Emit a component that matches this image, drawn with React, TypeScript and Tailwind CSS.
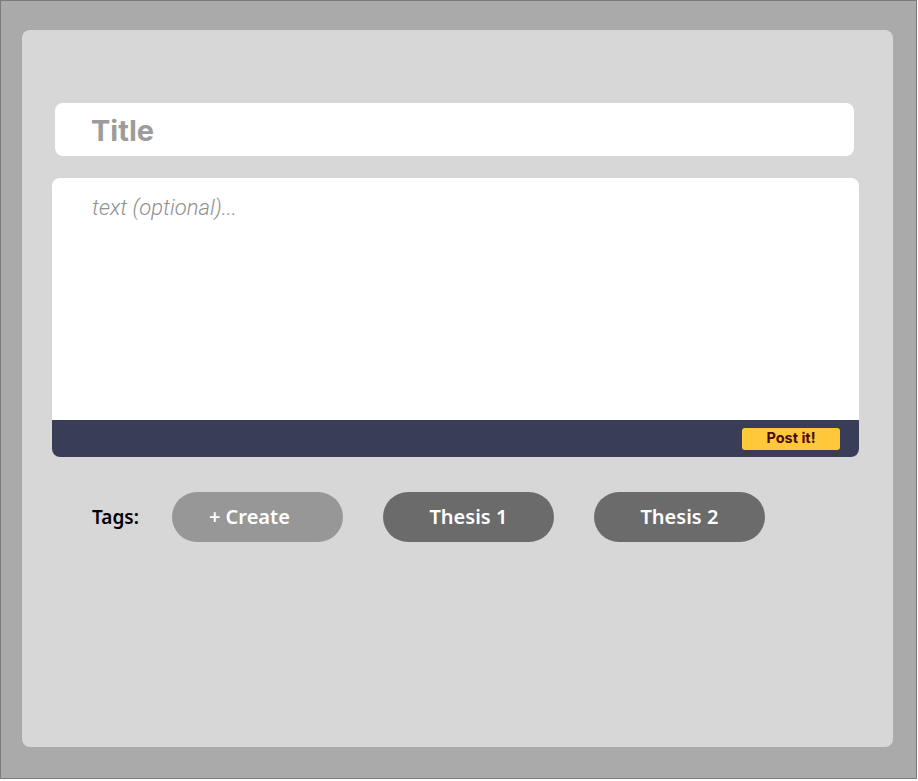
import React from "react";

const tags = [
  { label: "+ Create", className: "bg-[#979797] pr-[16px]" },
  { label: "Thesis 1", className: "bg-[#6b6b6b]" },
  { label: "Thesis 2", className: "bg-[#6b6b6b]" },
];

const App: React.FC = () => {
  return (
    <div className="w-[917px] h-[779px] border border-[#7b7b7b] bg-[#aaaaaa] pl-[21px] pt-[29px]">
      <div className="w-[871px] h-[717px] rounded-lg bg-[#d7d7d7] pt-[73px]">
        <div className="ml-[33px] w-[799px] h-[53px] rounded-lg bg-white flex items-center pl-[36px] pt-[2px]">
          <span className="font-['Inter',sans-serif] font-bold text-[29px] text-[#9c9c9c] leading-none">
            Title
          </span>
        </div>

        <div className="ml-[30px] mt-[22px] w-[807px] h-[279px] rounded-lg bg-white overflow-hidden flex flex-col">
          <div className="flex-1 pl-[40px] pt-[13px]">
            <span className="font-['Roboto',sans-serif] italic font-light text-[22px] text-[#8f8f8f]">
              text (optional)...
            </span>
          </div>
          <div className="h-[37px] bg-[#3a3d57] flex items-center justify-end pr-[19px]">
            <button className="w-[98px] h-[22px] rounded-[3px] bg-[#ffc83a] font-['Inter',sans-serif] font-bold text-[14.5px] text-[#4a0a0a] leading-none">
              Post it!
            </button>
          </div>
        </div>

        <div className="mt-[35px] ml-[70px] flex items-center">
          <span className="font-['Noto_Sans',sans-serif] font-semibold text-[19px] text-black mr-[33px]">
            Tags:
          </span>
          <div className="flex gap-[40px]">
            {tags.map((tag) => (
              <div
                key={tag.label}
                className={`w-[171px] h-[50px] rounded-full flex items-center justify-center text-white font-['Noto_Sans',sans-serif] font-semibold text-[20px] ${tag.className}`}
              >
                {tag.label}
              </div>
            ))}
          </div>
        </div>
      </div>
    </div>
  );
};

export default App;
